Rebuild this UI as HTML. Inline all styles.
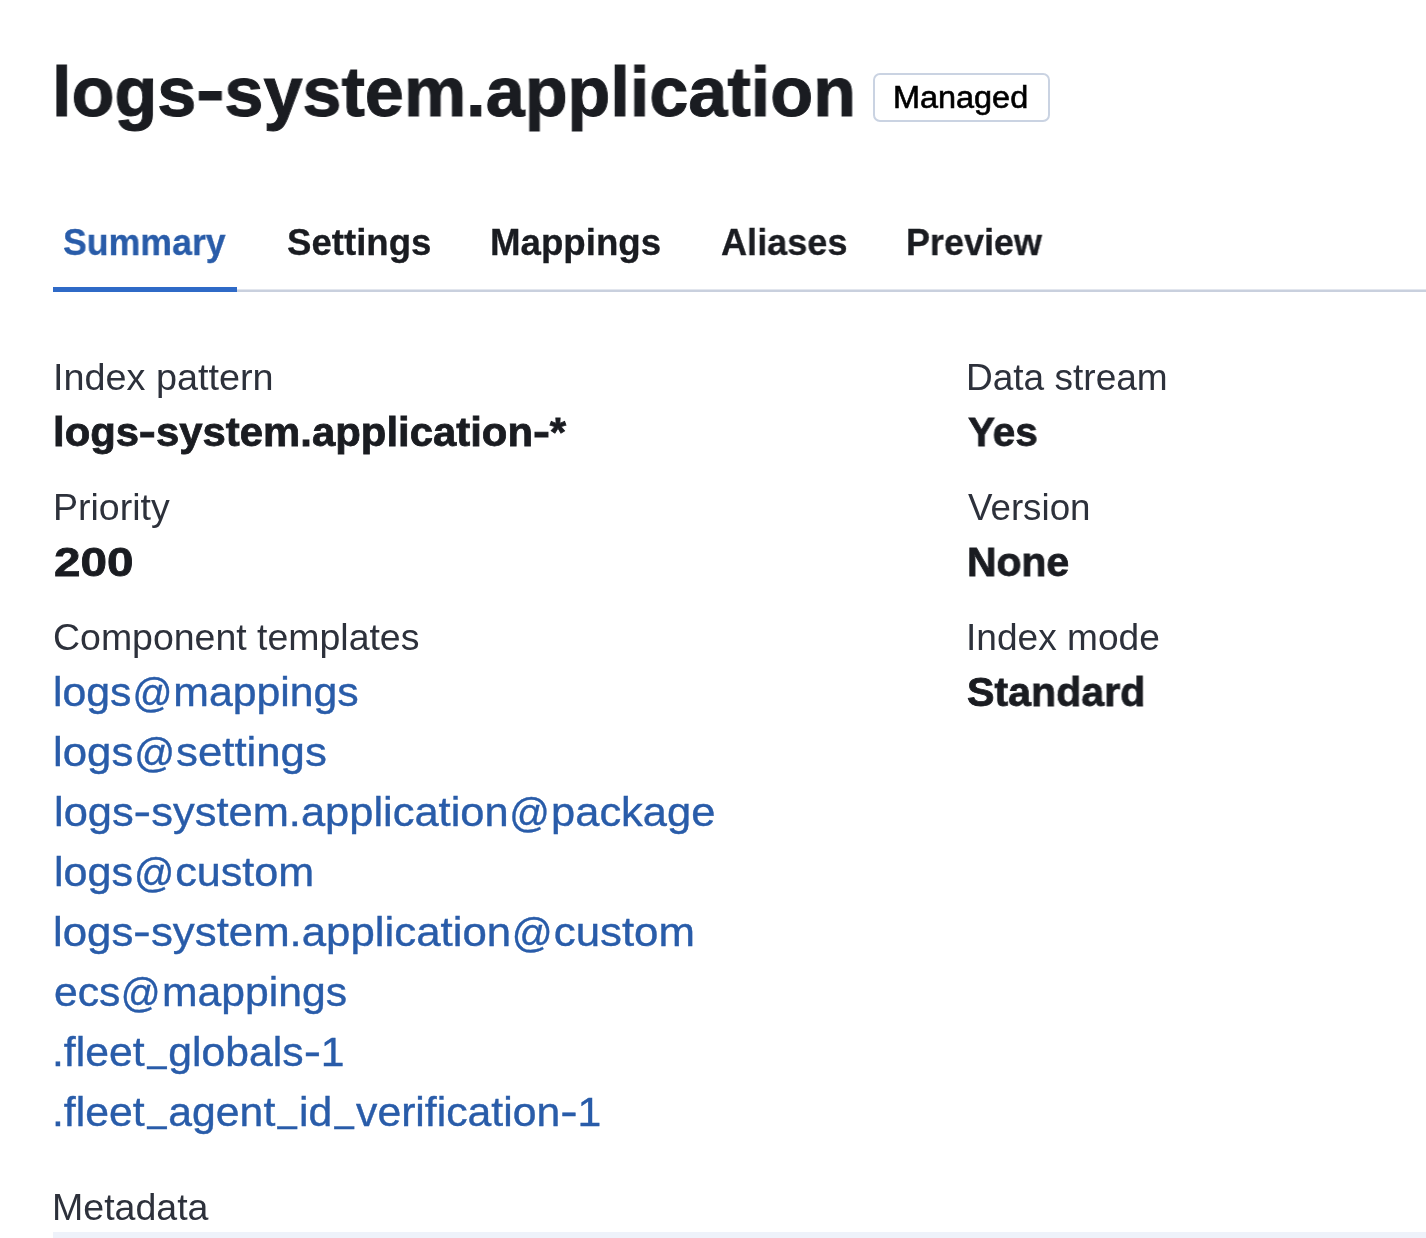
<!DOCTYPE html>
<html><head><meta charset="utf-8"><style>
html,body{margin:0;padding:0;background:#fff;}
body{width:1426px;height:1238px;position:relative;overflow:hidden;font-family:"Liberation Sans",sans-serif;}
.t{position:absolute;white-space:nowrap;line-height:1;transform-origin:0 0;will-change:transform;}
.hy{display:inline-block;position:relative;top:-0.035em;transform:scaleX(1.22);margin:0 0.035em;}
.us{display:inline-block;transform-origin:50% 100%;transform:translateY(-0.115em) scale(0.8,1);}
.at{display:inline-block;transform:translateY(0.035em) scaleX(0.92);margin:0 -0.02em;}
.badge{position:absolute;box-sizing:border-box;left:872.5px;top:73.3px;width:177px;height:48.4px;border:2px solid #cad3e2;border-radius:7px;}
.uline{position:absolute;left:53px;top:287px;width:184px;height:5px;background:#2f6ac7;}
.tabline{position:absolute;left:53px;top:289px;right:0;height:3px;background:linear-gradient(#e2e6ee 0,#e2e6ee 1px,#c9d0de 1px,#c9d0de 3px);}
.band{position:absolute;left:53px;top:1232px;right:0;height:6px;background:#eef2fa;}
</style></head><body>
<div class="badge"></div>
<div class="tabline"></div>
<div class="uline"></div>
<div class="band"></div>
<div id="title" class="t" style="left:52.03px;top:57.32px;font-size:70.80px;font-weight:700;color:#1a1c21;transform:scaleX(0.9907);-webkit-text-stroke:1.0px #1a1c21">logs<span class="hy">-</span>system.application</div>
<div id="badge" class="t" style="left:892.94px;top:81.90px;font-size:31.00px;font-weight:400;color:#000000;transform:scaleX(1.0456);-webkit-text-stroke:0.6px #000000">Managed</div>
<div id="tab1" class="t" style="left:63.02px;top:225.21px;font-size:36.40px;font-weight:700;color:#295ca9;transform:scaleX(0.9808);-webkit-text-stroke:0.3px #295ca9">Summary</div>
<div id="tab2" class="t" style="left:286.99px;top:225.01px;font-size:36.40px;font-weight:700;color:#1a1c21;transform:scaleX(1.0059);-webkit-text-stroke:0.3px #1a1c21">Settings</div>
<div id="tab3" class="t" style="left:489.98px;top:225.01px;font-size:36.40px;font-weight:700;color:#1a1c21;transform:scaleX(1.0079);-webkit-text-stroke:0.3px #1a1c21">Mappings</div>
<div id="tab4" class="t" style="left:721.01px;top:225.01px;font-size:36.40px;font-weight:700;color:#1a1c21;transform:scaleX(0.9921);-webkit-text-stroke:0.3px #1a1c21">Aliases</div>
<div id="tab5" class="t" style="left:906.03px;top:225.01px;font-size:36.40px;font-weight:700;color:#1a1c21;transform:scaleX(0.9878);-webkit-text-stroke:0.3px #1a1c21">Preview</div>
<div id="l1" class="t" style="left:52.83px;top:360.31px;font-size:36.20px;font-weight:400;color:#2d313b;transform:scaleX(1.0438);-webkit-text-stroke:0.0px #2d313b">Index pattern</div>
<div id="l2" class="t" style="left:965.96px;top:360.31px;font-size:36.20px;font-weight:400;color:#2d313b;transform:scaleX(1.0232);-webkit-text-stroke:0.0px #2d313b">Data stream</div>
<div id="l3" class="t" style="left:52.90px;top:490.31px;font-size:36.20px;font-weight:400;color:#2d313b;transform:scaleX(1.0360);-webkit-text-stroke:0.0px #2d313b">Priority</div>
<div id="l4" class="t" style="left:968.00px;top:490.31px;font-size:36.20px;font-weight:400;color:#2d313b;transform:scaleX(1.0148);-webkit-text-stroke:0.0px #2d313b">Version</div>
<div id="l5" class="t" style="left:52.96px;top:620.11px;font-size:36.20px;font-weight:400;color:#2d313b;transform:scaleX(1.0350);-webkit-text-stroke:0.0px #2d313b">Component templates</div>
<div id="l6" class="t" style="left:965.92px;top:620.31px;font-size:36.20px;font-weight:400;color:#2d313b;transform:scaleX(1.0248);-webkit-text-stroke:0.0px #2d313b">Index mode</div>
<div id="l7" class="t" style="left:51.90px;top:1189.70px;font-size:36.20px;font-weight:400;color:#2d313b;transform:scaleX(1.0370);-webkit-text-stroke:0.0px #2d313b">Metadata</div>
<div id="v1" class="t" style="left:52.96px;top:411.91px;font-size:41.30px;font-weight:700;color:#1a1c21;transform:scaleX(1.0140);-webkit-text-stroke:0.8px #1a1c21">logs<span class="hy">-</span>system.application<span class="hy">-</span>*</div>
<div id="v2" class="t" style="left:967.99px;top:411.91px;font-size:41.30px;font-weight:700;color:#1a1c21;transform:scaleX(0.9797);-webkit-text-stroke:0.8px #1a1c21">Yes</div>
<div id="v3" class="t" style="left:53.82px;top:541.91px;font-size:41.30px;font-weight:700;color:#1a1c21;transform:scaleX(1.1537);-webkit-text-stroke:0.8px #1a1c21">200</div>
<div id="v4" class="t" style="left:967.02px;top:541.91px;font-size:41.30px;font-weight:700;color:#1a1c21;transform:scaleX(0.9900);-webkit-text-stroke:0.8px #1a1c21">None</div>
<div id="v5" class="t" style="left:967.01px;top:671.91px;font-size:41.30px;font-weight:700;color:#1a1c21;transform:scaleX(0.9961);-webkit-text-stroke:0.8px #1a1c21">Standard</div>
<div id="k1" class="t" style="left:52.90px;top:672.21px;font-size:41.30px;font-weight:400;color:#295ca9;transform:scaleX(1.0360);-webkit-text-stroke:0.4px #295ca9">logs<span class="at">@</span>mappings</div>
<div id="k2" class="t" style="left:52.85px;top:732.21px;font-size:41.30px;font-weight:400;color:#295ca9;transform:scaleX(1.0597);-webkit-text-stroke:0.4px #295ca9">logs<span class="at">@</span>settings</div>
<div id="k3" class="t" style="left:53.87px;top:792.21px;font-size:41.30px;font-weight:400;color:#295ca9;transform:scaleX(1.0521);-webkit-text-stroke:0.4px #295ca9">logs<span class="hy">-</span>system.application<span class="at">@</span>package</div>
<div id="k4" class="t" style="left:53.88px;top:852.21px;font-size:41.30px;font-weight:400;color:#295ca9;transform:scaleX(1.0438);-webkit-text-stroke:0.4px #295ca9">logs<span class="at">@</span>custom</div>
<div id="k5" class="t" style="left:52.85px;top:912.21px;font-size:41.30px;font-weight:400;color:#295ca9;transform:scaleX(1.0601);-webkit-text-stroke:0.4px #295ca9">logs<span class="hy">-</span>system.application<span class="at">@</span>custom</div>
<div id="k6" class="t" style="left:53.95px;top:972.21px;font-size:41.30px;font-weight:400;color:#295ca9;transform:scaleX(1.0331);-webkit-text-stroke:0.4px #295ca9">ecs<span class="at">@</span>mappings</div>
<div id="k7" class="t" style="left:51.88px;top:1032.21px;font-size:41.30px;font-weight:400;color:#295ca9;transform:scaleX(1.0335);-webkit-text-stroke:0.4px #295ca9">.fleet<span class="us">_</span>globals<span class="hy">-</span>1</div>
<div id="k8" class="t" style="left:51.87px;top:1092.21px;font-size:41.30px;font-weight:400;color:#295ca9;transform:scaleX(1.0343);-webkit-text-stroke:0.4px #295ca9">.fleet<span class="us">_</span>agent<span class="us">_</span>id<span class="us">_</span>verification<span class="hy">-</span>1</div>
</body></html>
